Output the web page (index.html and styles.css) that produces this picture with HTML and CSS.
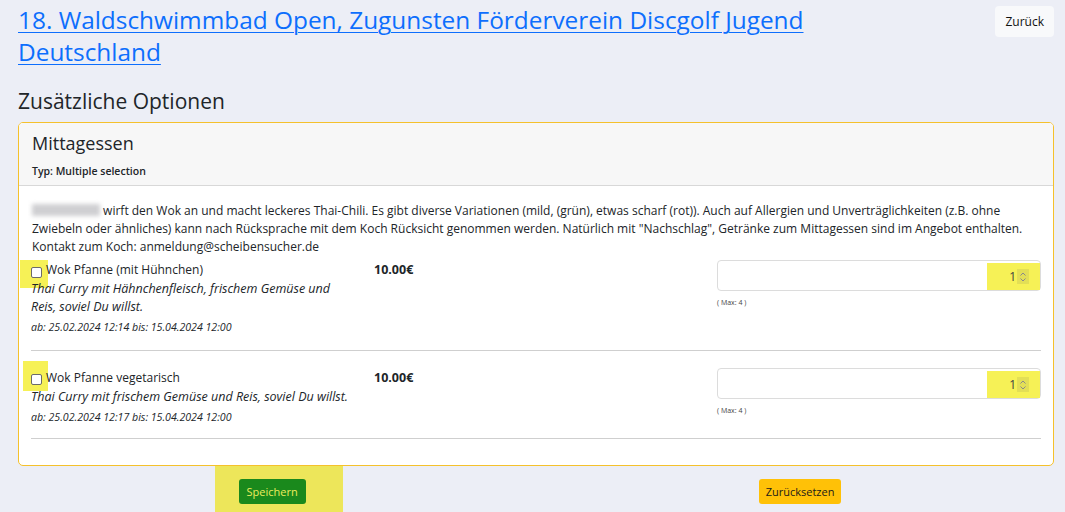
FILE: index.html
```html
<!DOCTYPE html>
<html lang="de">
<head>
<meta charset="utf-8">
<title>Zusätzliche Optionen</title>
<link rel="stylesheet" href="styles.css">
</head>
<body>
<div class="page">
  <header class="top">
    <h1 class="event-title"><a href="#">18. Waldschwimmbad Open, Zugunsten Förderverein Discgolf Jugend Deutschland</a></h1>
    <button class="btn btn-light">Zurück</button>
  </header>

  <h2 class="section-title">Zusätzliche Optionen</h2>

  <section class="card">
    <div class="card-header">
      <h3 class="card-title">Mittagessen</h3>
      <div class="card-type">Typ: Multiple selection</div>
    </div>
    <div class="card-body">
      <p class="intro"><span class="redacted"></span> wirft den Wok an und macht leckeres Thai-Chili. Es gibt diverse Variationen (mild, (grün), etwas scharf (rot)). Auch auf Allergien und Unverträglichkeiten (z.B. ohne Zwiebeln oder ähnliches) kann nach Rücksprache mit dem Koch Rücksicht genommen werden. Natürlich mit "Nachschlag", Getränke zum Mittagessen sind im Angebot enthalten. Kontakt zum Koch: anmeldung@scheibensucher.de</p>

      <div class="option">
        <div class="option-info">
          <label class="option-label"><span class="mark mark-check"><span class="checkbox"></span></span>Wok Pfanne (mit Hühnchen)</label>
          <div class="option-desc">Thai Curry mit Hähnchenfleisch, frischem Gemüse und Reis, soviel Du willst.</div>
          <div class="option-dates">ab: 25.02.2024 12:14 bis: 15.04.2024 12:00</div>
        </div>
        <div class="option-price">10.00€</div>
        <div class="option-qty">
          <div class="qty-input">
            <span class="mark mark-qty"><span class="qty-value">1</span><span class="spinner"><svg width="8" height="12" viewBox="0 0 8 12"><path d="M1.5 4.5 4 2 6.5 4.5M1.5 7.5 4 10 6.5 7.5" fill="none" stroke="#8a8a8a" stroke-width="1"/></svg></span></span>
          </div>
          <div class="qty-max">( Max: 4 )</div>
        </div>
      </div>

      <div class="option">
        <div class="option-info">
          <label class="option-label"><span class="mark mark-check mark-check-2"><span class="checkbox"></span></span>Wok Pfanne vegetarisch</label>
          <div class="option-desc">Thai Curry mit frischem Gemüse und Reis, soviel Du willst.</div>
          <div class="option-dates">ab: 25.02.2024 12:17 bis: 15.04.2024 12:00</div>
        </div>
        <div class="option-price">10.00€</div>
        <div class="option-qty">
          <div class="qty-input">
            <span class="mark mark-qty"><span class="qty-value">1</span><span class="spinner"><svg width="8" height="12" viewBox="0 0 8 12"><path d="M1.5 4.5 4 2 6.5 4.5M1.5 7.5 4 10 6.5 7.5" fill="none" stroke="#8a8a8a" stroke-width="1"/></svg></span></span>
          </div>
          <div class="qty-max">( Max: 4 )</div>
        </div>
      </div>
    </div>
  </section>

  <div class="actions">
    <div class="action-col"><span class="mark mark-save"><button class="btn btn-save">Speichern</button></span></div>
    <div class="action-col"><button class="btn btn-reset">Zurücksetzen</button></div>
  </div>
</div>
</body>
</html>
```

FILE: styles.css
```css
* { box-sizing: border-box; }

html, body {
  margin: 0;
  padding: 0;
}

body {
  background: #eceef6;
  color: #212529;
  font-family: "Open Sans", "Noto Sans", "Liberation Sans", sans-serif;
  font-size: 12px;
  overflow: hidden;
}

.page {
  padding: 4px 11px 0 18px;
}

/* ---------- header ---------- */
.top {
  display: flex;
  justify-content: space-between;
  align-items: flex-start;
}

.event-title {
  margin: 0;
  font-size: 24.4px;
  font-weight: 400;
  line-height: 32px;
  max-width: 810px;
}

.event-title a {
  color: #0d6efd;
  text-decoration: underline;
  text-underline-offset: 3px;
  text-decoration-thickness: 1px;
}

.btn {
  border: 0;
  font-family: inherit;
  cursor: pointer;
}

.btn-light {
  margin-top: 2px;
  background: #f8f9fb;
  color: #111;
  font-size: 12px;
  height: 31px;
  padding: 0 10px;
  border-radius: 4px;
}

.section-title {
  margin: 19px 0 0;
  font-size: 21px;
  font-weight: 400;
  line-height: 28px;
  color: #212529;
}

/* ---------- card ---------- */
.card {
  margin-top: 7px;
  border: 1px solid #f5c12c;
  border-radius: 5px;
  background: #fff;
  overflow: hidden;
}

.card-header {
  background: #f7f7f7;
  border-bottom: 1px solid #d8d8d8;
  padding: 6px 13px 6px;
  height: 63px;
}

.card-title {
  margin: 0;
  font-size: 18px;
  font-weight: 400;
  line-height: 28px;
}

.card-type {
  margin-top: 7px;
  font-size: 10.5px;
  font-weight: 600;
  line-height: 14px;
}

.card-body {
  padding: 16px 12px 26px 12px;
}

.intro {
  margin: 0 0 0 1px;
  font-size: 12px;
  line-height: 18px;
}

.redacted {
  display: inline-block;
  width: 68px;
  height: 12px;
  vertical-align: -1px;
  background: #cfcfd2;
  filter: blur(2px);
}

/* ---------- options ---------- */
.option {
  display: grid;
  grid-template-columns: 343px 343px 1fr;
  border-bottom: 1px solid #cfcfcf;
  padding: 5px 0 15px;
}

.option + .option {
  padding: 18px 0 13px;
}

.option-label {
  display: flex;
  align-items: flex-start;
  font-size: 12px;
  line-height: 18px;
}

.mark {
  background: #f6f156;
}

/* highlight behind the checkbox, overhanging the text line */
.mark-check {
  display: flex;
  align-items: flex-start;
  justify-content: flex-end;
  flex: none;
  width: 28px;
  height: 28px;
  margin: -1px -2px -9px -11px;
  padding: 7px 6px 0 0;
}

.mark-check-2 {
  width: 25px;
  height: 30px;
  margin: -8px -2px -4px -8px;
  padding-top: 13px;
}

.checkbox {
  width: 11px;
  height: 11px;
  border: 1px solid #6b6b6b;
  border-radius: 2px;
  background: #fff;
}

.option-desc {
  margin-top: 1px;
  font-size: 12.5px;
  font-style: italic;
  line-height: 18px;
  width: 320px;
}

.option-dates {
  margin-top: 3px;
  font-size: 10.6px;
  font-style: italic;
  line-height: 16px;
}

.option-price {
  font-size: 12.5px;
  font-weight: 700;
  line-height: 18px;
}

.option-qty {
  margin-top: -1px;
}

.qty-input {
  display: flex;
  justify-content: flex-end;
  align-items: center;
  height: 31px;
  border: 1px solid #dcdcdc;
  border-radius: 4px;
  background: #fff;
}

.mark-qty {
  display: flex;
  align-items: center;
  justify-content: flex-end;
  width: 53px;
  height: 27px;
  margin-top: 2px;
  padding-right: 11px;
}

.qty-value {
  font-size: 12px;
  color: #444;
  margin-right: 1px;
}

.spinner {
  display: flex;
  align-items: center;
  justify-content: center;
  width: 12px;
  height: 15px;
  background: #e3df56;
}

.qty-max {
  margin-top: 7px;
  font-size: 7px;
  color: #444;
  line-height: 10px;
}

/* ---------- actions ---------- */
.actions {
  display: grid;
  grid-template-columns: 1fr 1fr;
  margin: 0 -10px;
}

.action-col {
  display: flex;
  justify-content: center;
  align-items: flex-start;
  padding-top: 13px;
}

.mark-save {
  display: flex;
  justify-content: flex-start;
  margin: -13px 0 0 13px;
  padding: 13px 0 9px 24px;
  width: 128px;
  background: #ede65a;
}

.btn-save {
  background: #1a891c;
  color: #ecec5c;
  font-size: 11px;
  height: 25px;
  padding: 0 8px;
  border-radius: 3px;
}

.btn-reset {
  background: #ffc107;
  color: #1a1a1a;
  font-size: 11px;
  height: 25px;
  padding: 0 7px;
  border-radius: 3px;
}
```
